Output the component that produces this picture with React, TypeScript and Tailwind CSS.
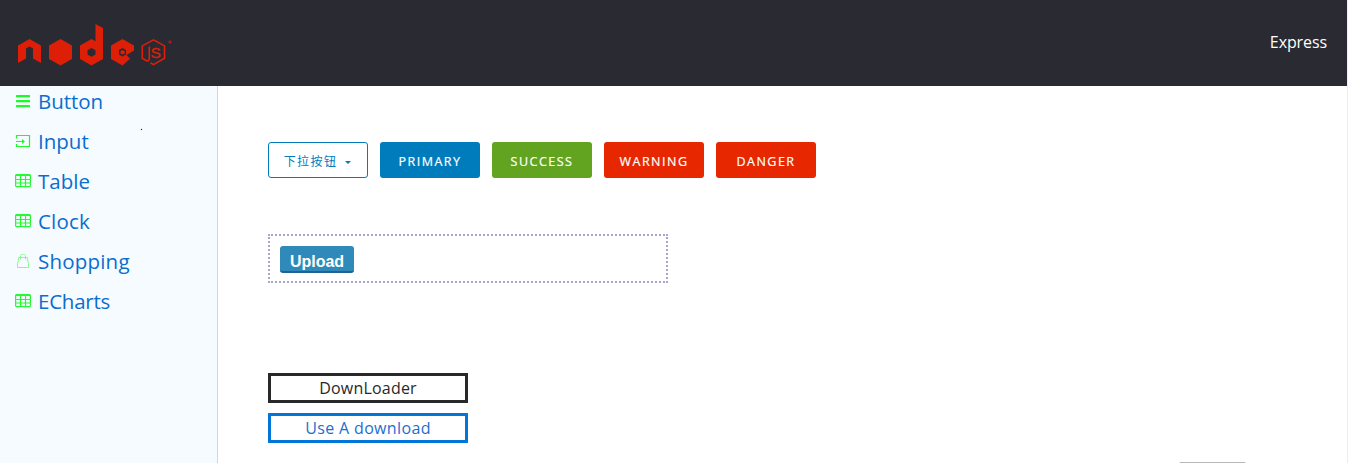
import React from "react";

function NodeLogo() {
  return (
    <svg width="156" height="44" viewBox="0 0 156 44" fill="#dd1f07" role="img" aria-label="Node.js">
      <path d="M0 21.5 11.5 15 23 21.5V39L15 34.5V24.5L11.5 22.5 8 24.5V34.5L0 39Z" />
      <path d="M42.5 15 54 21.5V35L42.5 41.5 31 35V21.5Z" />
      <path fillRule="evenodd" d="M77.5 0 85 4V35L73.500 41.500 62 35V21.500L73.500 15 77.500 17.300ZM73.500 24 69.500 26.200V30.500L73.500 32.800 77.500 30.500V26.200Z" />
      <path fillRule="evenodd" d="M104.500 15 116 21.500V26.500L108.500 31 112 34.800 104.500 41.500 93 35V21.500ZM104.500 24 101 26V30.500L104.500 32.500 108 30.500V26Z" />
      <path d="M104.500 26 106.700 27.200V29.500L104.500 30.500 102.500 29.500V27.200Z" />
      <path d="M132.500 38.700 135.500 40.600 146.500 34.300V21.900L135.500 15.800 124.300 21.900V34.300L128 36.500C130 37.500 131.300 36.500 131.300 34.500V22.500" fill="none" stroke="#dd1f07" strokeWidth="1.600" />
      <text x="132.600" y="33.500" fontFamily="Liberation Sans, sans-serif" fontSize="15.500" stroke="#dd1f07" strokeWidth="0.300">S</text>
      <circle cx="152" cy="18" r="1.700" fill="#9c2118" />
    </svg>
  );
}

function MenuIcon() {
  return (
    <svg width="16" height="16" fill="#1bfb27">
      <rect x="1" y="1" width="14" height="2.300" rx="0.500" />
      <rect x="1" y="6" width="14" height="2.300" rx="0.500" />
      <rect x="1" y="11" width="14" height="2.300" rx="0.500" />
    </svg>
  );
}

function InputIcon() {
  return (
    <svg width="16" height="16" fill="none" stroke="#1bfb27" strokeWidth="1.200">
      <path d="M1.500 4.500V1.500h13v11h-13V10M1 7.500h8" />
      <path d="M7 5v5L10 7.500z" fill="#1bfb27" stroke="none" />
    </svg>
  );
}

function TableIcon() {
  return (
    <svg width="16" height="16" fill="none" stroke="#24fa30" strokeWidth="1.200">
      <rect x="0.600" y="0.600" width="14.800" height="12" rx="1" />
      <path d="M1 1.500h14M1 5.500h14M1 9h14M5.500 2v10M10.500 2v10" />
    </svg>
  );
}

function BagIcon() {
  return (
    <svg width="16" height="16" fill="none" stroke="#86fb8c">
      <path d="M3.500 3.500h9q0 4 1 6v4h-11v-4q1-2 1-6zM5.500 5.500V1.500q0-1.500 2.500-1.500t2.500 1.500V5.500" />
    </svg>
  );
}

const menu = [
  { label: "Button", icon: <MenuIcon />, text: "tracking-[-0.05px]" },
  { label: "Input", icon: <InputIcon />, text: "tracking-[0]" },
  { label: "Table", icon: <TableIcon />, text: "tracking-[0]" },
  { label: "Clock", icon: <TableIcon />, text: "tracking-[0.2px]" },
  { label: "Shopping", icon: <BagIcon />, text: "tracking-[0.2px]" },
  { label: "ECharts", icon: <TableIcon />, text: "tracking-[-0.25px]" },
];

const actions = [
  { label: "PRIMARY", style: "bg-[#007cbd]" },
  { label: "SUCCESS", style: "bg-[#62a420]" },
  { label: "WARNING", style: "bg-[#e62700]" },
  { label: "DANGER", style: "bg-[#e62700]" },
];

export default function App() {
  return (
    <div className="relative flex h-[463px] w-[1348px] flex-col overflow-hidden border-r border-[#ededed] bg-white font-['Open_Sans','Noto_Sans_CJK_SC',sans-serif]">
      <header className="flex h-[86px] shrink-0 items-start justify-between bg-[#2a2a33] pr-5 pl-[18px] text-white">
        <div className="pt-6"><NodeLogo /></div>
        <span className="pt-[30px] text-base leading-6 tracking-[-0.1px]">Express</span>
      </header>
      <div className="flex min-h-0 flex-1">
        <aside className="relative w-[218px] shrink-0 border-r border-[#d5d5d5] bg-[#f5fbfe] pl-[15px]">
          <nav className="-mt-1">
            {menu.map((item) => (
              <a key={item.label} href="#" className="flex h-10 items-center gap-[7px] text-[20.5px] leading-7 text-[#0a6dd0]">
                {item.icon}
                <span className={`pb-0.5 ${item.text}`}>{item.label}</span>
              </a>
            ))}
          </nav>
          <span className="absolute top-[43px] left-[141px] h-px w-px bg-[#1414b0] shadow-[0_0_1px_#1414b0]" />
        </aside>
        <main className="flex-1 pt-14 pl-[50px]">
          <div className="flex gap-3 text-xs tracking-[1.4px]">
            <button className="flex h-9 w-[100px] items-center justify-center gap-2 rounded-[3px] border border-[#007cbd] pt-0.5 pr-px text-[#007cbd]">
              <span className="pt-px">下拉按钮</span>
              <svg className="mt-0.5" width="6" height="3" fill="currentColor"><path d="M0 0h6L3 3z" /></svg>
            </button>
            {actions.map((a) => (
              <button key={a.label} className={`h-9 w-[100px] rounded-[3px] pt-[3px] text-[12.5px] leading-4 font-medium tracking-[1.5px] text-white [-webkit-text-stroke:0.2px_white] ${a.style}`}>{a.label}</button>
            ))}
          </div>
          <div className="mt-14 h-[49px] w-[400px] border-2 border-dotted border-[#aaa5cb] p-2.5">
            <button className="block h-[27px] w-[74px] rounded-[3px] border-b-2 border-[#1d6590] bg-[#2f8aba] pt-[6px] font-['Liberation_Sans',sans-serif] text-base leading-[19px] font-bold text-white">Upload</button>
          </div>
          <div className="mt-[90px] flex w-[200px] flex-col gap-2.5 text-center text-base leading-6">
            <button className="h-[30px] border-3 border-[#292929] tracking-[0.2px] text-[#292929]">DownLoader</button>
            <button className="h-[30px] border-3 border-[#0275d8] tracking-[0.35px] text-[#1b6fd0]">Use A download</button>
          </div>
        </main>
      </div>
      <div className="absolute top-[462px] left-[1179px] h-4 w-[67px] rounded-t-[2px] bg-[#b7b7b7]" />
    </div>
  );
}
